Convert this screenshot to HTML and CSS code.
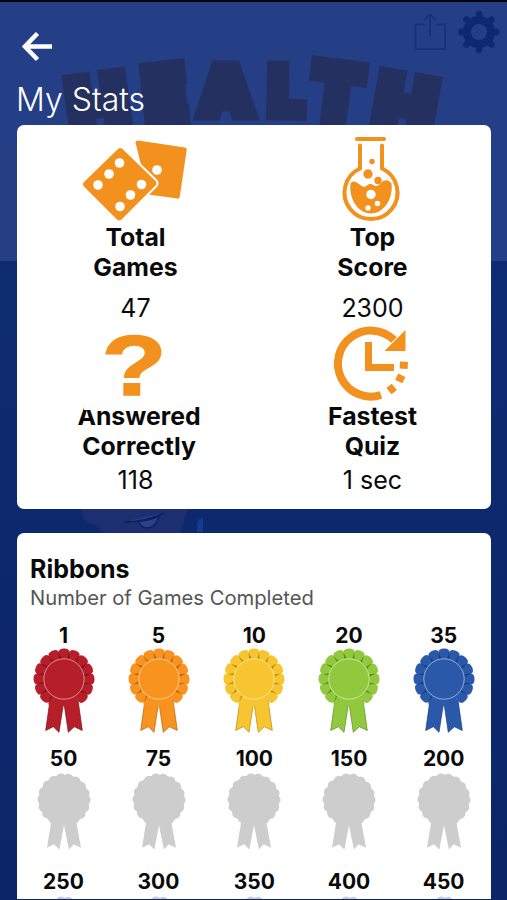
FILE: index.html
```html
<!DOCTYPE html>
<html lang="en">
<head>
  <meta charset="UTF-8">
  <meta name="viewport" content="width=device-width, initial-scale=1.0">
  <title>My Stats</title>
  <link rel="stylesheet" href="styles.css">
</head>
<body>
  <!-- dimmed home screen behind the stats -->
  <svg class="backdrop" viewBox="0 0 507 900" aria-hidden="true">
    <g class="logo">
      <text transform="translate(102 135) rotate(-8) scale(.98 1)">H</text>
      <text transform="translate(168 125) rotate(-6) scale(.84 1)">E</text>
      <text transform="translate(226 115) scale(.86 .84)">A</text>
      <text transform="translate(286 115) rotate(1) scale(.78 .84)">L</text>
      <text transform="translate(333 123) rotate(7) scale(.92 1)">T</text>
      <text transform="translate(400 135) rotate(10) scale(.98 1)">H</text>
    </g>
    <g class="share">
      <path d="M425 24.500h-9.500v24.500h29.500v-24.500h-9.500M430 36v-21.500M424 20l6-5.500 6 5.500"/>
    </g>
    <g class="gear" transform="translate(479 32)">
      <circle r="12"/>
      <path d="M0-13v-5M0 13v5M-13 0h-4.500M13 0h4.500M-9-9l-3.500-3.500M9-9l3.500-3.500M-9 9l-3.500 3.500M9 9l3.500 3.500"/>
    </g>
    <g class="face">
      <path class="skin" d="M82 505c-2 12 4 20 12 19l11 10h75l8-27z"/>
      <path class="mouth" d="M124 522c12 0 29-3 40-9M138 521c5 10 17 10 21-5-6 3-14 5-21 5z"/>
      <path class="hand" d="M197 524q1-6 6-6v14h-6z"/>
    </g>
  </svg>

  <svg class="defs" aria-hidden="true">
    <defs>
      <g id="leaf">
        <path class="fill" d="M-4.800-19l-.7-8q.2-3.300 5.500-3.500t5.500 3.500l-.7 8z"/>
        <path class="shade" d="M-5.600-27l1 7.500h3.600q-3-2.500-4.600-7.500z"/>
      </g>
    </defs>
    <symbol id="ribbon" viewBox="0 0 62 86">
      <g class="tail">
        <path d="M17 52l-4.300 30.500 7.600-3.800 5.700 5.600 4.200-27 .8-4z"/>
        <path d="M45 52l4.300 30.500-8-3.800-6 5.600-4-27v-4z"/>
      </g>
      <g transform="translate(31 31)">
        <use href="#leaf" transform="rotate(-157.500)"/>
        <use href="#leaf" transform="rotate(-135)"/>
        <use href="#leaf" transform="rotate(-112.500)"/>
        <use href="#leaf" transform="rotate(-90)"/>
        <use href="#leaf" transform="rotate(-67.500)"/>
        <use href="#leaf" transform="rotate(-45)"/>
        <use href="#leaf" transform="rotate(-22.500)"/>
        <use href="#leaf"/>
        <use href="#leaf" transform="rotate(22.500)"/>
        <use href="#leaf" transform="rotate(45)"/>
        <use href="#leaf" transform="rotate(67.500)"/>
        <use href="#leaf" transform="rotate(90)"/>
        <use href="#leaf" transform="rotate(112.500)"/>
        <use href="#leaf" transform="rotate(135)"/>
      </g>
      <path class="fill" d="M19 48h24l3 12-14.500-2L16 60z"/>
      <circle class="base" cx="31" cy="31" r="21"/>
      <circle class="ring" cx="31" cy="31" r="20.200"/>
    </symbol>
    <symbol id="ribbon-off" viewBox="0 0 62 86">
      <path d="M18 50l-5.300 32.500 7.600-3.800 5.700 5.600 4.200-22 .8-4 .8 4 4.500 22 5-5.600 8 3.800-6-32.500z"/>
      <circle cx="31" cy="31" r="27.200"/>
      <circle class="scallop" cx="31" cy="31" r="24.500"/>
    </symbol>
  </svg>

  <header class="top">
    <svg class="back" viewBox="0 0 32 30"><path d="M30 14.500H4M15.500 1.500L2.800 14.500l12.700 13"/></svg>
    <h1>My Stats</h1>
  </header>

  <main>
    <section class="card stats">
      <div class="stat">
        <svg class="stat-icon" viewBox="0 0 104 84">
          <g transform="translate(-3 0)">
            <path class="orange" d="M54.500 2.500q.3-2.300 2.500-2l47 7q2 .4 1.700 2.400l-7 47q-.4 2-2.400 1.700l-29-4z"/>
            <path class="die" d="M37 9q2.300-1.800 4.500 0l33 32q2 2.300 0 4.500l-34 34q-2.300 2-4.500 0l-33-33q-2-2.300 0-4.500z"/>
            <g class="white">
              <circle cx="38.500" cy="23" r="4.800"/><circle cx="28" cy="34" r="4.800"/><circle cx="17" cy="45" r="4.800"/>
              <circle cx="60.500" cy="44.500" r="4.800"/><circle cx="49.500" cy="55" r="4.800"/><circle cx="39" cy="66.500" r="4.800"/>
              <circle cx="76" cy="30" r="4.800"/>
            </g>
          </g>
        </svg>
        <h2>Total<br>Games</h2>
        <p>47</p>
      </div>
      <div class="stat">
        <svg class="stat-icon" viewBox="0 0 104 84">
          <g transform="translate(-1.500 -4.500)">
            <path class="line" d="M37.500 3.500h27"/>
            <path class="line" d="M40.500 10V33a26.500 26.500 0 1 0 22 0V10"/>
            <path class="orange" d="M31 48c4-5 8 1 12 3s6-5 10-2 6 1 9-2 7-3 10 1c2 14-7 30-20.500 30S29 62 31 48z"/>
            <g class="orange">
              <circle cx="52.500" cy="26" r="2.700"/><circle cx="48.500" cy="38.500" r="4.700"/><circle cx="58.500" cy="45" r="3.700"/>
            </g>
            <g class="white">
              <circle cx="51.500" cy="59" r="4.700"/><circle cx="58" cy="68" r="2.700"/><circle cx="48.500" cy="72.500" r="2.700"/>
            </g>
          </g>
        </svg>
        <h2>Top<br>Score</h2>
        <p>2300</p>
      </div>
      <div class="stat second answered">
        <svg class="stat-icon" viewBox="0 0 104 84">
          <text class="question" transform="translate(50 69) scale(1.240 1)">?</text>
        </svg>
        <h2>Answered<br>Correctly</h2>
        <p>118</p>
      </div>
      <div class="stat second">
        <svg class="stat-icon" viewBox="0 0 104 84">
          <path class="arc" d="M73 14A33 33 0 1 0 60 69"/>
          <path class="orange" d="M63.500 25L84.500 4v21z"/>
          <path class="hands" d="M47.500 16v25.500H73"/>
          <path class="dashes" d="M73.300 60.800l-5.300 4.400M80.800 49.300l-3.100 6.200M83 35.800l-.4 6.900"/>
        </svg>
        <h2>Fastest<br>Quiz</h2>
        <p>1 sec</p>
      </div>
    </section>

    <section class="card ribbons">
      <h3>Ribbons</h3>
      <p class="sub">Number of Games Completed</p>
      <div class="ribbon-grid">
        <div class="ribbon red"><span>1</span><svg><use href="#ribbon"/></svg></div>
        <div class="ribbon orange-ribbon"><span>5</span><svg><use href="#ribbon"/></svg></div>
        <div class="ribbon yellow"><span>10</span><svg><use href="#ribbon"/></svg></div>
        <div class="ribbon green"><span>20</span><svg><use href="#ribbon"/></svg></div>
        <div class="ribbon blue"><span>35</span><svg><use href="#ribbon"/></svg></div>
        <div class="ribbon off"><span>50</span><svg><use href="#ribbon-off"/></svg></div>
        <div class="ribbon off"><span>75</span><svg><use href="#ribbon-off"/></svg></div>
        <div class="ribbon off"><span>100</span><svg><use href="#ribbon-off"/></svg></div>
        <div class="ribbon off"><span>150</span><svg><use href="#ribbon-off"/></svg></div>
        <div class="ribbon off"><span>200</span><svg><use href="#ribbon-off"/></svg></div>
        <div class="ribbon off"><span>250</span><svg><use href="#ribbon-off"/></svg></div>
        <div class="ribbon off"><span>300</span><svg><use href="#ribbon-off"/></svg></div>
        <div class="ribbon off"><span>350</span><svg><use href="#ribbon-off"/></svg></div>
        <div class="ribbon off"><span>400</span><svg><use href="#ribbon-off"/></svg></div>
        <div class="ribbon off"><span>450</span><svg><use href="#ribbon-off"/></svg></div>
      </div>
    </section>
  </main>
</body>
</html>
```
FILE: styles.css
```css
* {
  margin: 0;
  padding: 0;
  box-sizing: border-box;
}
body {
  height: 900px;
  overflow: hidden;
  position: relative;
  font-family: Inter, "Liberation Sans", sans-serif;
  color: #0a0a0a;
  background: linear-gradient(#243f86 0, #243f86 261px, #0e2c72 261px, #0b2568 100%);
  border-top: 2px solid #02030c;
}
.backdrop {
  position: absolute;
  top: -2px;
  left: 0;
  width: 507px;
  height: 900px;
}
.defs {
  position: absolute;
  width: 0;
  height: 0;
}
.logo text {
  font-size: 80px;
  font-weight: 900;
  text-anchor: middle;
  fill: #24305f;
  stroke: #24305f;
  stroke-width: 13;
}
.share path {
  fill: none;
  stroke: #143078;
  stroke-width: 1.6;
}
.gear circle {
  fill: none;
  stroke: #0b2a70;
  stroke-width: 8;
}
.gear path {
  stroke: #0b2a70;
  stroke-width: 6.5;
  stroke-linecap: round;
}
.skin {
  fill: #1c2f70;
}
.mouth {
  fill: #2b3f8c;
  stroke: #0d205c;
  stroke-width: 1.5;
}
.hand {
  fill: #123c91;
}
.top {
  position: relative;
  height: 123px;
  padding: 30px 17px 0;
  color: #fff;
}
.back {
  display: block;
  width: 32px;
  height: 30px;
  margin-left: 5px;
}
.back path {
  fill: none;
  stroke: #fff;
  stroke-width: 4.5;
}
h1 {
  margin-top: 18px;
  margin-left: -1px;
  font-size: 32px;
  line-height: 40px;
  font-weight: 350;
}
main {
  position: relative;
  height: 774px;
  padding: 0 16px 0 17px;
  overflow: hidden;
}
.card {
  background: #fff;
  border-radius: 7px;
}
.stats {
  height: 384px;
  margin-bottom: 24px;
  display: grid;
  grid-template-columns: 1fr 1fr;
  grid-template-rows: 199px 1fr;
}
.stat {
  display: flex;
  flex-direction: column;
  align-items: center;
  text-align: center;
  padding-top: 15px;
}
.stat-icon {
  flex: none;
  position: relative;
  z-index: 1;
  width: 104px;
  height: 84px;
  overflow: visible;
}
.stat h2 {
  font-size: 24.8px;
  line-height: 30px;
  font-weight: 700;
  margin-top: -2px;
}
.stat p {
  font-size: 25px;
  line-height: 30px;
  margin-top: 11px;
}
.second {
  padding-top: 2px;
}
.second h2 {
  margin-top: -9px;
}
.second p {
  margin-top: 4px;
}
/* the icon box cuts into the top of the label */
.answered .stat-icon {
  background: #fff;
}
.answered h2 {
  padding-left: 7px;
}
.orange {
  fill: #f2911d;
}
.white {
  fill: #fff;
}
.die {
  fill: #f2911d;
  stroke: #fff;
  stroke-width: 4;
  paint-order: stroke;
}
.line,
.arc,
.hands,
.dashes {
  fill: none;
  stroke: #f2911d;
  stroke-width: 4;
}
.line {
  stroke-linecap: round;
}
.arc,
.dashes {
  stroke-width: 8;
}
.hands {
  stroke-width: 7;
}
.question {
  font: bold 86px "Liberation Sans", sans-serif;
  text-anchor: middle;
  fill: #f2911d;
  stroke: #f2911d;
  stroke-width: 1.5;
}
.ribbons {
  height: 420px;
  padding-top: 21px;
}
h3 {
  padding-left: 13px;
  font-size: 25px;
  line-height: 30px;
}
.sub {
  padding-left: 13px;
  font-size: 20.2px;
  line-height: 26px;
  color: #555;
  margin-top: 1px;
}
.ribbon-grid {
  display: grid;
  grid-template-columns: 93px 97px repeat(3, 1fr);
  grid-auto-rows: 123px;
  margin-top: 12px;
}
.ribbon {
  display: flex;
  flex-direction: column;
  align-items: center;
}
.ribbon span {
  font-size: 21px;
  line-height: 26px;
  font-weight: 700;
}
.ribbon svg {
  width: 62px;
  height: 86px;
  margin-top: -1px;
  color: var(--ribbon);
  fill: currentColor;
}
.ribbon.off svg {
  width: 58px;
  height: 80px;
}
.base,
.fill {
  fill: currentColor;
}
.shade {
  fill: var(--shade);
}
.ring {
  fill: none;
  stroke: #fff;
  stroke-opacity: 0.55;
  stroke-width: 0.9;
}
.tail path {
  stroke: var(--shade);
  stroke-width: 0.7;
}
.red {
  --ribbon: #b61f29;
  --shade: #7d1118;
}
.orange-ribbon {
  --ribbon: #f7931e;
  --shade: #b8600c;
}
.yellow {
  --ribbon: #f7c52f;
  --shade: #b98a10;
}
.green {
  --ribbon: #92c83e;
  --shade: #568f1c;
}
.blue {
  --ribbon: #2b59a9;
  --shade: #153c80;
}
.off {
  --ribbon: #cdcdcd;
}
.scallop {
  fill: none;
  stroke: currentColor;
  stroke-width: 8;
  stroke-linecap: round;
  stroke-dasharray: 0.1 8.452;
}
```
